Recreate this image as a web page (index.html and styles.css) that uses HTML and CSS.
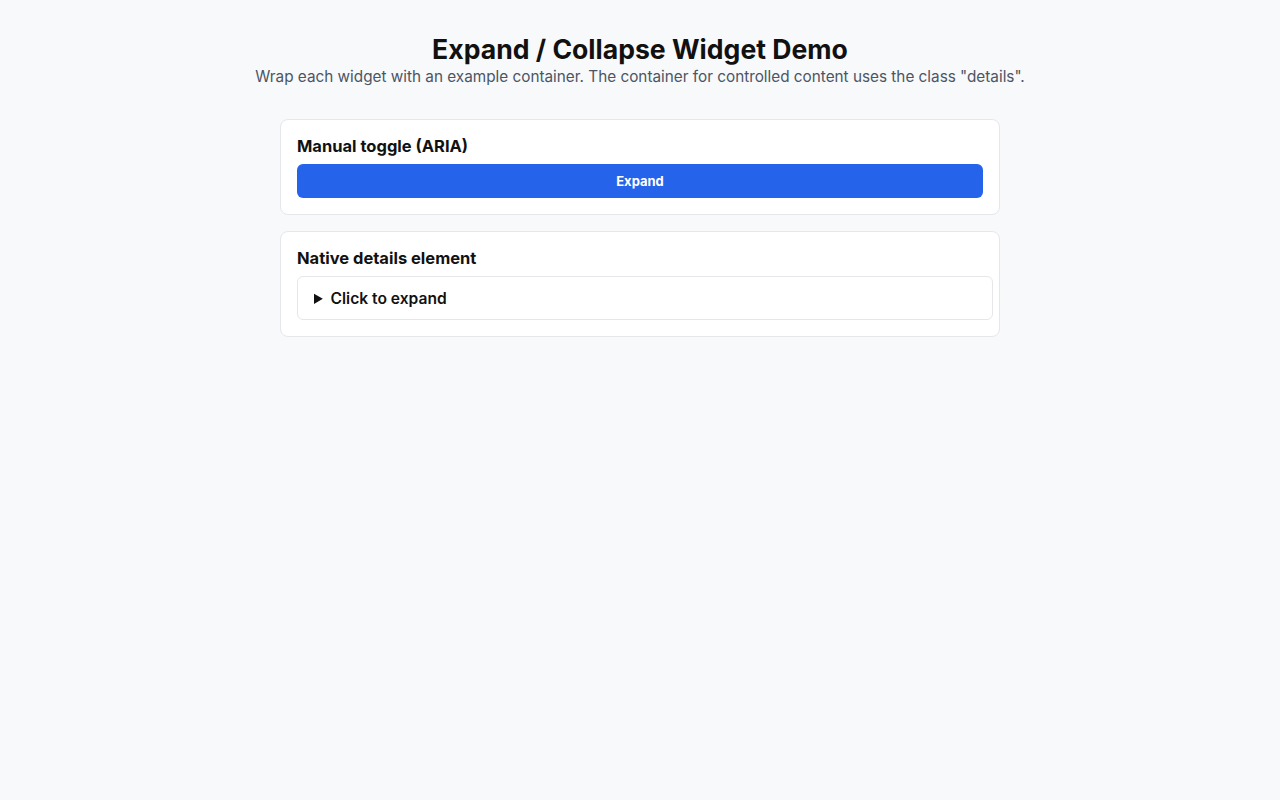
FILE: index.html
```html
<!DOCTYPE html>
<html lang="en">
<head>
    <meta charset="UTF-8">
    <meta name="viewport" content="width=device-width, initial-scale=1.0">
    <title>Expand / Collapse Widget Demo</title>
    <link rel="stylesheet" href="styles.css">
</head>
<body>
    <header class="page-head">
        <h1>Expand / Collapse Widget Demo</h1>
        <p>Wrap each widget with an example container. The container for controlled content uses the class "details".</p>
    </header>
    <main class="examples">
        <section class="example">
            <h2>Manual toggle (ARIA)</h2>
            <button class="toggle" type="button" aria-expanded="false" aria-controls="panel1">Expand</button>
            <div class="details" id="panel1" hidden>
                <p>Hidden content revealed by the button.</p>
            </div>
        </section>
        <section class="example">
            <h2>Native details element</h2>
            <details class="native">
                <summary>Click to expand</summary>
                <p>Content shown by the native element.</p>
            </details>
        </section>
    </main>
    <script>
        document.querySelectorAll(".toggle").forEach(function (btn) {
            btn.addEventListener("click", function () {
                const panel = document.getElementById(btn.getAttribute("aria-controls"));
                const open = btn.getAttribute("aria-expanded") === "true";
                btn.setAttribute("aria-expanded", String(!open));
                btn.textContent = open ? "Expand" : "Collapse";
                panel.hidden = open;
            });
        });
    </script>
</body>
</html>
```

FILE: styles.css
```css
* {
    margin: 0;
    padding: 0;
}
body {
    background: #f8f9fb;
    color: #111111;
    font-family: Inter, "Noto Sans", sans-serif;
    padding: 33px 16px;
}
.page-head {
    text-align: center;
}
.page-head h1 {
    font-size: 26.6px;
    line-height: 32px;
    font-weight: 700;
}
.page-head p {
    color: #4b5563;
    font-size: 15.3px;
    line-height: 24px;
}
.examples {
    width: 720px;
    margin: 30px auto 0;
    display: flex;
    flex-direction: column;
    gap: 16px;
}
.example {
    background: #ffffff;
    border: 1px solid #e5e7eb;
    border-radius: 8px;
    padding: 16px;
    display: flex;
    flex-direction: column;
    gap: 8px;
}
.example h2 {
    font-size: 16.5px;
    line-height: 20px;
    font-weight: 700;
}
.toggle {
    background: #2563eb;
    color: #ffffff;
    border: none;
    border-radius: 6px;
    height: 34px;
    font-family: inherit;
    font-size: 13px;
    font-weight: 700;
    cursor: pointer;
}
.details {
    padding: 12px 0 0;
}
.native {
    border: 1px solid #e5e7eb;
    border-radius: 6px;
    padding: 4px;
    width: 100%;
}
.native summary {
    padding: 8px 12px 6px;
    font-size: 15.6px;
    line-height: 20px;
    font-weight: 600;
    cursor: pointer;
}
.native p {
    padding: 0 12px 8px;
}
```
